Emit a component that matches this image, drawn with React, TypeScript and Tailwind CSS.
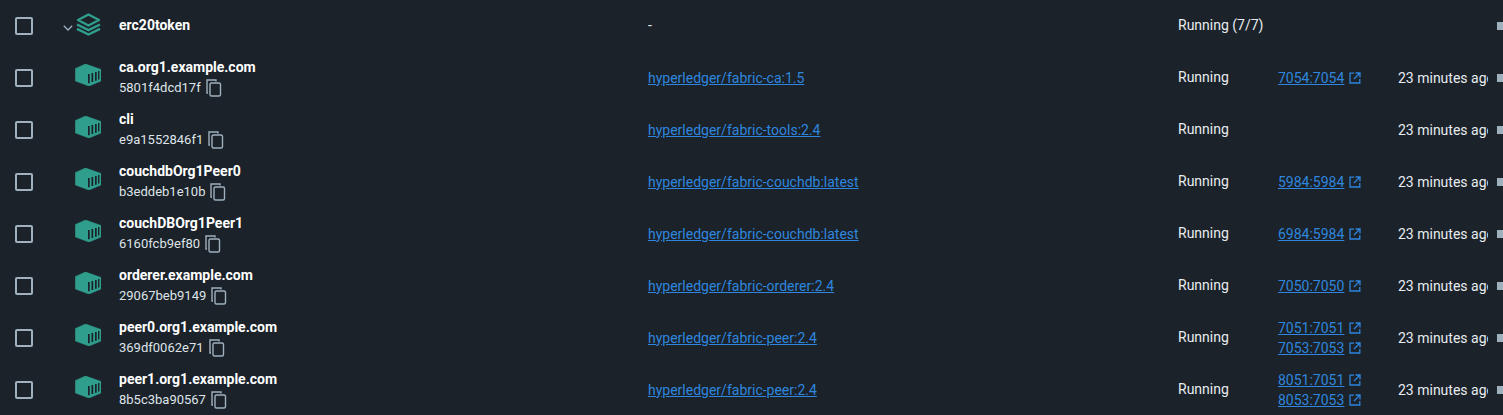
import React from 'react';

type Row = {
  name: string;
  id: string;
  image: string;
  ports: string[];
};

const ROWS: Row[] = [
  { name: 'ca.org1.example.com', id: '5801f4dcd17f', image: 'hyperledger/fabric-ca:1.5', ports: ['7054:7054'] },
  { name: 'cli', id: 'e9a1552846f1', image: 'hyperledger/fabric-tools:2.4', ports: [] },
  { name: 'couchdbOrg1Peer0', id: 'b3eddeb1e10b', image: 'hyperledger/fabric-couchdb:latest', ports: ['5984:5984'] },
  { name: 'couchDBOrg1Peer1', id: '6160fcb9ef80', image: 'hyperledger/fabric-couchdb:latest', ports: ['6984:5984'] },
  { name: 'orderer.example.com', id: '29067beb9149', image: 'hyperledger/fabric-orderer:2.4', ports: ['7050:7050'] },
  { name: 'peer0.org1.example.com', id: '369df0062e71', image: 'hyperledger/fabric-peer:2.4', ports: ['7051:7051', '7053:7053'] },
  { name: 'peer1.org1.example.com', id: '8b5c3ba90567', image: 'hyperledger/fabric-peer:2.4', ports: ['8051:7051', '8053:7053'] },
];

const Checkbox = () => (
  <div className="ml-[15px] w-[18px] h-[18px] shrink-0 rounded-[2px] border-2 border-[#9fb0be]" />
);

const Chevron = () => (
  <svg width="10" height="6" viewBox="0 0 10 6" fill="none" stroke="#9fb0be" strokeWidth="1.3" className="shrink-0 mt-[3px]">
    <path d="M0.8 0.8 L5 5 L9.2 0.8" />
  </svg>
);

const StackIcon = () => (
  <svg width="25" height="23" viewBox="0 0 25 23" fill="none" className="shrink-0">
    <path d="M12.5 1.5 L23 7 L12.5 12.5 L2 7 Z" stroke="#2f9e8c" strokeWidth="2.4" strokeLinejoin="round" />
    <path d="M1 11.5 L12.5 17.2 L24 11.5" stroke="#2f9e8c" strokeWidth="2.4" />
    <path d="M1 15.8 L12.5 21.5 L24 15.8" stroke="#2f9e8c" strokeWidth="2.4" />
  </svg>
);

const ContainerIcon = () => (
  <svg width="26" height="22" viewBox="0 0 26 22" className="shrink-0">
    <path d="M10.5 0 L26 5.5 L26 17 L14 22 L0.5 17 L0.5 4.5 Z" fill="#2f9e8c" stroke="#2f9e8c" strokeWidth="0.6" strokeLinejoin="round" />
    <path d="M13 10h1.7v9.2H13zM16.5 9h1.7v9H16.5zM20 8h1.7v8.8H20zM23 7h1.4v8.6H23z" fill="#1b222a" />
  </svg>
);

const CopyIcon = () => (
  <svg width="16" height="18" viewBox="0 0 16 18" fill="none" stroke="#9fb0be" strokeWidth="1.4" className="shrink-0">
    <path d="M2 14 L1 14 L1 1 L10 1 L10 2.5" />
    <rect x="4" y="4" width="10.5" height="13" rx="1.5" />
  </svg>
);

const ExternalIcon = () => (
  <svg width="12" height="12" viewBox="0 0 12 12" fill="none" stroke="#2e86de" strokeWidth="1.3" className="shrink-0">
    <path d="M5 1.2H1v9.8h9.8V7" />
    <path d="M6.5 1h4.5v4.5M11 1 5 7" />
  </svg>
);

const App: React.FC = () => {
  return (
    <div className="w-[1503px] h-[415px] overflow-hidden bg-[#1b222a] text-[14px] text-[#e8ecef] antialiased font-['Roboto',sans-serif]">
      <div className="flex items-center h-[52px]">
        <Checkbox />
        <div className="w-[30px] shrink-0" />
        <Chevron />
        <div className="ml-[3px] w-[43px] shrink-0 -mt-[4px]">
          <StackIcon />
        </div>
        <div className="w-[529px] shrink-0 font-bold text-white -mt-[2px]">erc20token</div>
        <div className="w-[530px] shrink-0 -mt-[2px]">-</div>
        <div className="shrink-0 w-[319px] -mt-[2px]">Running (7/7)</div>
        <div className="w-2 h-2 bg-[#9fb0be] shrink-0" />
      </div>

      {ROWS.map((row) => (
        <div key={row.name} className="flex items-center h-[52px]">
          <Checkbox />
          <div className="w-[42px] shrink-0" />
          <div className="w-[44px] shrink-0 -mt-[6px]">
            <ContainerIcon />
          </div>
          <div className="w-[529px] shrink-0 flex flex-col gap-[3px]">
            <div className="font-bold text-white leading-[18px] -mt-[1px]">{row.name}</div>
            <div className="flex items-center gap-[5px] text-[13px] leading-[18px] text-[#dfe4e8]">
              {row.id}
              <CopyIcon />
            </div>
          </div>
          <div className="w-[530px] shrink-0">
            <a className="text-[#2e86de] underline">{row.image}</a>
          </div>
          <div className="w-[100px] shrink-0 -mt-[2px]">Running</div>
          <div className="w-[120px] shrink-0 flex flex-col gap-[2px]">
            {row.ports.map((port) => (
              <div key={port} className="flex items-center gap-[5px] leading-[18px]">
                <a className="text-[#2e86de] underline">{port}</a>
                <ExternalIcon />
              </div>
            ))}
          </div>
          <div className="w-[90px] shrink-0 overflow-hidden whitespace-nowrap">23 minutes ago</div>
          <div className="ml-[9px] w-2 h-2 bg-[#9fb0be] shrink-0" />
        </div>
      ))}
    </div>
  );
};

export default App;
